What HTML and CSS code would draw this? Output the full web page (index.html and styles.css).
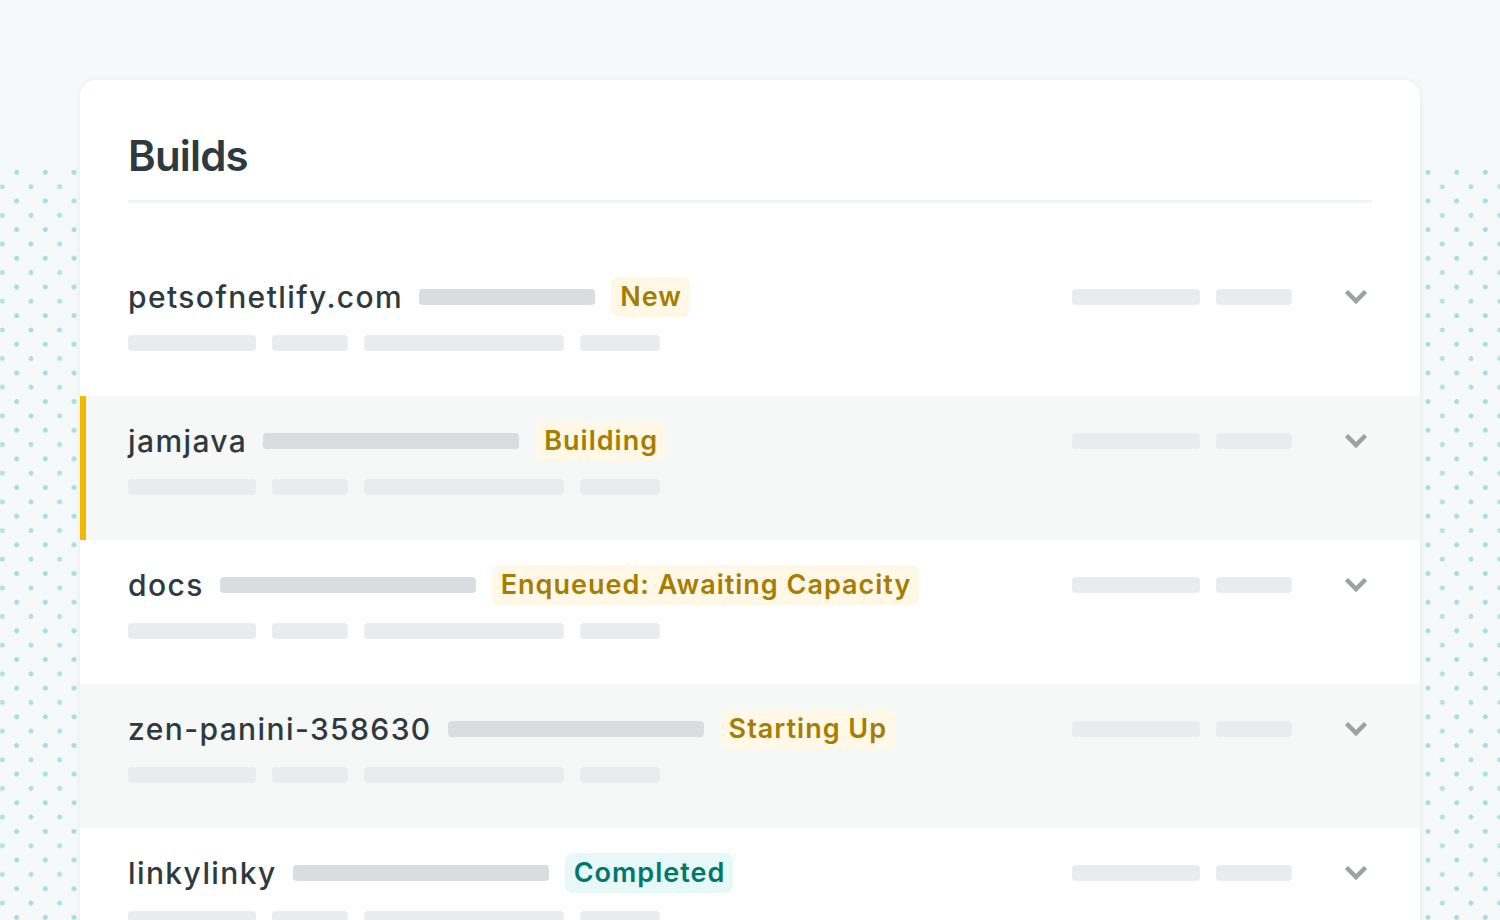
FILE: index.html
```html
<!DOCTYPE html>
<html lang="en">
<head>
<meta charset="utf-8">
<title>Builds</title>
<link rel="stylesheet" href="styles.css">
</head>
<body>
<div class="page">
  <div class="dots dots-left"></div>
  <main class="card">
    <h1 class="title">Builds</h1>
    <div class="rows">
      <div class="row">
        <div class="line1">
          <div class="left">
            <span class="name">petsofnetlify.com</span>
            <span class="bar dark w176"></span>
            <span class="badge warn">New</span>
          </div>
          <div class="right">
            <span class="bar w128"></span>
            <span class="bar w76"></span>
            <svg class="chev" viewBox="0 0 24 16" width="24" height="16"><polyline points="2.5,2.5 12,12 21.5,2.5"/></svg>
          </div>
        </div>
        <div class="line2"><span class="bar w128"></span><span class="bar w76"></span><span class="bar w200"></span><span class="bar w80"></span></div>
      </div>
      <div class="row alt active">
        <div class="line1">
          <div class="left">
            <span class="name">jamjava</span>
            <span class="bar dark w256"></span>
            <span class="badge warn">Building</span>
          </div>
          <div class="right">
            <span class="bar w128"></span>
            <span class="bar w76"></span>
            <svg class="chev" viewBox="0 0 24 16" width="24" height="16"><polyline points="2.5,2.5 12,12 21.5,2.5"/></svg>
          </div>
        </div>
        <div class="line2"><span class="bar w128"></span><span class="bar w76"></span><span class="bar w200"></span><span class="bar w80"></span></div>
      </div>
      <div class="row">
        <div class="line1">
          <div class="left">
            <span class="name">docs</span>
            <span class="bar dark w256"></span>
            <span class="badge warn">Enqueued: Awaiting Capacity</span>
          </div>
          <div class="right">
            <span class="bar w128"></span>
            <span class="bar w76"></span>
            <svg class="chev" viewBox="0 0 24 16" width="24" height="16"><polyline points="2.5,2.5 12,12 21.5,2.5"/></svg>
          </div>
        </div>
        <div class="line2"><span class="bar w128"></span><span class="bar w76"></span><span class="bar w200"></span><span class="bar w80"></span></div>
      </div>
      <div class="row alt">
        <div class="line1">
          <div class="left">
            <span class="name">zen-panini-358630</span>
            <span class="bar dark w256"></span>
            <span class="badge warn">Starting Up</span>
          </div>
          <div class="right">
            <span class="bar w128"></span>
            <span class="bar w76"></span>
            <svg class="chev" viewBox="0 0 24 16" width="24" height="16"><polyline points="2.5,2.5 12,12 21.5,2.5"/></svg>
          </div>
        </div>
        <div class="line2"><span class="bar w128"></span><span class="bar w76"></span><span class="bar w200"></span><span class="bar w80"></span></div>
      </div>
      <div class="row">
        <div class="line1">
          <div class="left">
            <span class="name">linkylinky</span>
            <span class="bar dark w256"></span>
            <span class="badge ok">Completed</span>
          </div>
          <div class="right">
            <span class="bar w128"></span>
            <span class="bar w76"></span>
            <svg class="chev" viewBox="0 0 24 16" width="24" height="16"><polyline points="2.5,2.5 12,12 21.5,2.5"/></svg>
          </div>
        </div>
        <div class="line2"><span class="bar w128"></span><span class="bar w76"></span><span class="bar w200"></span><span class="bar w80"></span></div>
      </div>
    </div>
  </main>
  <div class="dots dots-right"></div>
</div>
</body>
</html>
```
FILE: styles.css
```css
* { box-sizing: border-box; }

html, body {
  margin: 0;
  padding: 0;
}

body {
  width: 1500px;
  height: 920px;
  overflow: hidden;
  background: #f5f9fa;
  font-family: Inter, "Noto Sans", "Liberation Sans", sans-serif;
  color: #2e3a40;
}

.page {
  display: flex;
  align-items: stretch;
  padding-top: 80px;
  height: 1100px;
}

.dots {
  flex: 0 0 80px;
  margin-top: 85px;
  background-image:
    radial-gradient(circle at center, #a3e0db 2.1px, rgba(163,224,219,0) 2.8px),
    radial-gradient(circle at 0 0, #a3e0db 2.1px, rgba(163,224,219,0) 2.8px),
    radial-gradient(circle at 100% 0, #a3e0db 2.1px, rgba(163,224,219,0) 2.8px),
    radial-gradient(circle at 0 100%, #a3e0db 2.1px, rgba(163,224,219,0) 2.8px),
    radial-gradient(circle at 100% 100%, #a3e0db 2.1px, rgba(163,224,219,0) 2.8px);
  background-size: 28.67px 28.67px;
}

.dots-left { background-position: 2.33px -7px; }
.dots-right { background-position: -6.33px -7px; }

.card {
  flex: 0 0 1340px;
  background: #ffffff;
  border-radius: 16px;
  box-shadow: 0 1px 6px rgba(30, 50, 60, 0.07);
  padding-top: 55px;
}

.title {
  margin: 0 48px;
  font-size: 42px;
  line-height: 42px;
  font-weight: 600;
  letter-spacing: -0.8px;
  color: #2d3a40;
  padding-bottom: 23px;
  border-bottom: 3px solid #f2f5f6;
}

.rows {
  margin-top: 49px;
}

.row {
  height: 144px;
  padding: 25px 52px 0 48px;
}

.row.alt { background: #f6f8f8; }

.row.active { box-shadow: inset 6px 0 0 #f5b800; }

.line1 {
  display: flex;
  align-items: center;
  justify-content: space-between;
  height: 40px;
}

.left, .right {
  display: flex;
  align-items: center;
  gap: 16px;
}

.name {
  font-size: 30px;
  font-weight: 500;
  letter-spacing: 1.4px;
  color: #2e3a40;
  line-height: 40px;
  white-space: nowrap;
}

.bar {
  display: block;
  height: 16px;
  border-radius: 4px;
  background: #e9ebed;
}

.bar.dark { background: #d9dddf; }

.w76 { width: 76px; }
.w80 { width: 80px; }
.w128 { width: 128px; }
.w176 { width: 176px; }
.w200 { width: 200px; }
.w256 { width: 256px; }

.badge {
  display: block;
  height: 40px;
  line-height: 40px;
  padding: 0 8px 0 9px;
  border-radius: 8px;
  font-size: 27px;
  font-weight: 600;
  letter-spacing: 1px;
  white-space: nowrap;
}

.badge.warn { background: #fff8e6; color: #a67d00; }
.badge.ok { background: #e6f8f7; color: #00776b; }

.chev {
  display: block;
  margin-left: 36px;
  fill: none;
  stroke: #9ba2a6;
  stroke-width: 4.5;
}

.line2 {
  display: flex;
  gap: 16px;
  margin-top: 18px;
}
```
